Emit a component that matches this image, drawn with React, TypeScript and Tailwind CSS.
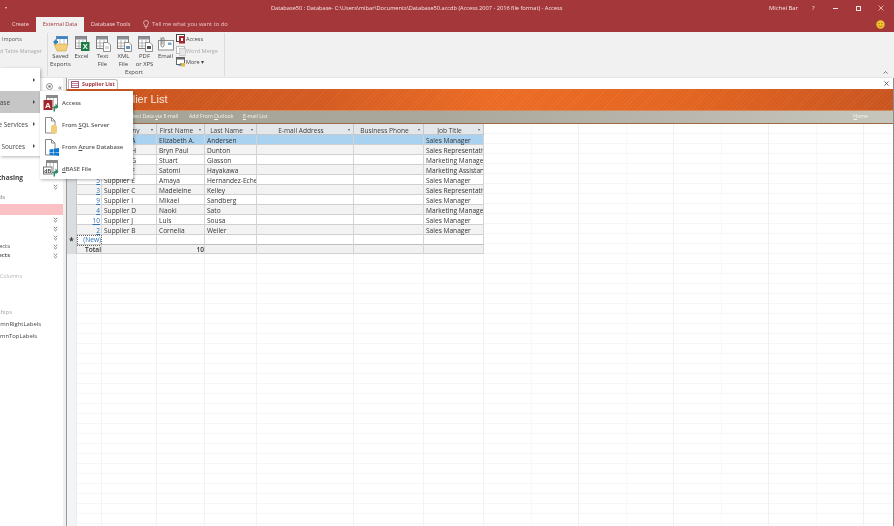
import type { ReactNode } from 'react'

const COLS = 'grid grid-cols-[10px_25px_55px_48px_52px_97px_70px_60px]'

const SUPPLIERS = [
  ['1', 'Supplier A', 'Elizabeth A.', 'Andersen', 'Sales Manager'],
  ['8', 'Supplier H', 'Bryn Paul', 'Dunton', 'Sales Representative'],
  ['7', 'Supplier G', 'Stuart', 'Glasson', 'Marketing Manager'],
  ['6', 'Supplier F', 'Satomi', 'Hayakawa', 'Marketing Assistant'],
  ['5', 'Supplier E', 'Amaya', 'Hernandez-Echevarria', 'Sales Manager'],
  ['3', 'Supplier C', 'Madeleine', 'Kelley', 'Sales Representative'],
  ['9', 'Supplier I', 'Mikael', 'Sandberg', 'Sales Manager'],
  ['4', 'Supplier D', 'Naoki', 'Sato', 'Marketing Manager'],
  ['10', 'Supplier J', 'Luis', 'Sousa', 'Sales Manager'],
  ['2', 'Supplier B', 'Cornelia', 'Weiler', 'Sales Manager'],
]

const HEADERS = ['Company', 'First Name', 'Last Name', 'E-mail Address', 'Business Phone', 'Job Title']

// ── Ribbon icons ───────────────────────────────────────────────────────────
function TableBase({ children, size = 16 }: { children?: ReactNode; size?: number }) {
  return (
    <svg width={size} height={size} viewBox="0 0 16 16" className="block">
      <rect x="1.5" y="0.5" width="11" height="12" fill="#fff" stroke="#7d7d7d" />
      <rect x="1.5" y="0.5" width="11" height="3" fill="#8a8f96" />
      <path d="M5 4v8M9 4v8M2 7h10M2 10h10" stroke="#9a9a9a" strokeWidth="0.7" />
      {children}
    </svg>
  )
}

function SavedExportsIcon() {
  return (
    <svg width="18" height="16" viewBox="0 0 18 16" className="block">
      <rect x="4.5" y="0.5" width="11" height="8" fill="#fff" stroke="#6c8fb5" />
      <rect x="4.5" y="0.5" width="11" height="2.5" fill="#3f86c8" />
      <path d="M8 3v5M12 3v5" stroke="#9ab" strokeWidth="0.7" />
      <path d="M2 8h14l-2 7H5z" fill="#f2cf78" stroke="#c9a24a" strokeWidth="0.6" />
      <path d="M1 6l3-3v2h2v2H4v2z" fill="#2f83c5" />
    </svg>
  )
}

function ExcelIcon() {
  return (
    <TableBase>
      <rect x="7" y="6" width="8.5" height="9" fill="#1e7a45" />
      <text x="11.2" y="13.4" textAnchor="middle" fontSize="7.5" fontWeight="700" fill="#fff" fontFamily="Liberation Sans">X</text>
    </TableBase>
  )
}

function PageIcon({ mark }: { mark: string }) {
  return (
    <TableBase>
      <path d="M8.5 6.5h4.5l2.5 2.5v6.5h-7z" fill="#fff" stroke="#777" strokeWidth="0.8" />
      <rect x="10" y="10" width="4" height="3" fill={mark} />
    </TableBase>
  )
}

function EmailIcon() {
  return (
    <svg width="16" height="16" viewBox="0 0 16 16" className="block">
      <rect x="0.5" y="4.5" width="15" height="9.5" fill="#fff" stroke="#8c8c8c" />
      <rect x="10" y="6.5" width="3.5" height="2.5" fill="#7fa6cf" />
      <path d="M3 1.5v8a1.5 1.5 0 0 0 3 0v-7a1 1 0 0 0-2 0v6" fill="none" stroke="#777" strokeWidth="0.9" />
    </svg>
  )
}

function AccessSmall() {
  return (
    <svg width="10" height="10" viewBox="0 0 10 10" className="block">
      <rect x="0.5" y="0.5" width="8" height="7" fill="#fff" stroke="#444" />
      <rect x="3" y="2" width="6" height="7.5" fill="#a4262c" />
      <rect x="5" y="4" width="2" height="3" fill="#fff" />
    </svg>
  )
}

function WordMergeSmall() {
  return (
    <svg width="10" height="10" viewBox="0 0 10 10" className="block">
      <rect x="0.5" y="0.5" width="8" height="7" fill="#fff" stroke="#bbb" />
      <rect x="3.5" y="2.5" width="6" height="7" fill="#e6e6e6" stroke="#bbb" strokeWidth="0.6" />
    </svg>
  )
}

function MoreSmall() {
  return (
    <svg width="10" height="10" viewBox="0 0 10 10" className="block">
      <rect x="0.5" y="0.5" width="8" height="7" fill="#fff" stroke="#666" />
      <rect x="0.5" y="0.5" width="8" height="2" fill="#666" />
      <path d="M4 6h5v3.5H4z" fill="#e8b94a" />
      <path d="M2 9l2.5-3 1 2z" fill="#2f83c5" />
    </svg>
  )
}

function RibbonButton({ icon, lines }: { icon: ReactNode; lines: string[] }) {
  return (
    <div className="w-[21px] flex flex-col items-center pt-[3px]">
      <div className="h-[15px] flex items-start justify-center">{icon}</div>
      <div className="mt-[1px] text-center leading-[8px] whitespace-nowrap">
        {lines.map((l) => (
          <div key={l}>{l}</div>
        ))}
      </div>
    </div>
  )
}

// ── Menu icons ─────────────────────────────────────────────────────────────
function GreenArrow({ x, y }: { x: number; y: number }) {
  return <path transform={`translate(${x} ${y})`} d="M0 8V4.5C0 3 1 2.5 2 2.5V0l3 3-3 3V4C1.5 4 1.5 4.5 1.5 5v3z" fill="#2a8a63" />
}

function MenuAccessIcon() {
  return (
    <svg width="17" height="17" viewBox="0 0 17 17" className="block">
      <rect x="3.5" y="0.5" width="11" height="12" fill="#fff" stroke="#888" />
      <rect x="3.5" y="0.5" width="11" height="2.5" fill="#8a8a8a" />
      <path d="M7 3v9M10.5 3v9" stroke="#aaa" strokeWidth="0.7" />
      <rect x="0.5" y="5" width="9" height="10" fill="#a4262c" />
      <text x="5" y="13" textAnchor="middle" fontSize="8" fontWeight="700" fill="#fff" fontFamily="Liberation Sans">A</text>
      <GreenArrow x={10.5} y={8.5} />
    </svg>
  )
}

function MenuSqlIcon() {
  return (
    <svg width="17" height="17" viewBox="0 0 17 17" className="block">
      <path d="M2.5 0.5h6l3.5 3.5v12h-9.5z" fill="#fff" stroke="#888" />
      <path d="M8.5 0.5v3.5h3.5" fill="none" stroke="#888" />
      <rect x="8" y="8" width="6" height="8.5" rx="1.5" fill="#f0ce7a" />
    </svg>
  )
}

function MenuAzureIcon() {
  return (
    <svg width="17" height="17" viewBox="0 0 17 17" className="block">
      <path d="M2.5 0.5h6l3.5 3.5v12h-9.5z" fill="#fff" stroke="#888" />
      <path d="M8.5 0.5v3.5h3.5" fill="none" stroke="#888" />
      <path d="M6.5 10.5l4-.6v3h-4zM11 9.8l5-.8v4h-5zM6.5 13.4h4v3l-4-.6zM11 13.4h5v3.6l-5-.8z" fill="#0a78d4" />
    </svg>
  )
}

function MenuDbaseIcon() {
  return (
    <svg width="17" height="17" viewBox="0 0 17 17" className="block">
      <rect x="3.5" y="0.5" width="11" height="12" fill="#fff" stroke="#888" />
      <rect x="3.5" y="0.5" width="11" height="2.5" fill="#8a8a8a" />
      <path d="M7 3v9M10.5 3v9" stroke="#aaa" strokeWidth="0.7" />
      <rect x="0.5" y="7" width="8.5" height="7" fill="#fff" stroke="#777" />
      <text x="4.7" y="12.5" textAnchor="middle" fontSize="5" fill="#333" fontFamily="Liberation Sans">dB</text>
      <GreenArrow x={10.5} y={8.5} />
    </svg>
  )
}

function Chevrons() {
  return (
    <svg width="5" height="6" viewBox="0 0 5 6" className="block">
      <path d="M0.8 0.8l1.7 1.6 1.7-1.6M0.8 3.3l1.7 1.6 1.7-1.6" fill="none" stroke="#666" strokeWidth="0.8" />
    </svg>
  )
}

function DropArrow() {
  return <span className="absolute right-[3px] top-[5px] w-0 h-0 border-l-[1.5px] border-r-[1.5px] border-t-[2px] border-l-transparent border-r-transparent border-t-[#555]" />
}

// Text whose start is cut off by the left edge of the window
function Clip({ w, children, className = '' }: { w: string; children: ReactNode; className?: string }) {
  return <div className={`${w} flex justify-end overflow-hidden whitespace-nowrap ${className}`}>{children}</div>
}

function MenuArrow() {
  return <span className="w-0 h-0 border-t-[2px] border-b-[2px] border-l-[2.5px] border-t-transparent border-b-transparent border-l-[#444]" />
}

function NavPane() {
  return (
    <div className="w-[63px] shrink-0 bg-white flex flex-col text-[5.9px] leading-[9px] text-[#444]">
      <div className="mt-[95px] h-[9px] shrink-0 flex">
        <Clip w="w-[23px]" className="font-bold text-[6.6px]">Supplier Purchasing</Clip>
      </div>
      <div className="h-[10px] shrink-0 flex items-center pl-[53px]"><Chevrons /></div>
      <div className="h-[10px] shrink-0 flex items-center text-[#777]"><Clip w="w-[5px]">Details</Clip></div>
      <div className="mt-[2px] h-[11px] shrink-0 bg-[#fbc0c3]" />
      <div className="h-[9px] shrink-0 flex items-center pl-[53px]"><Chevrons /></div>
      <div className="h-[9px] shrink-0 flex items-center pl-[53px]"><Chevrons /></div>
      <div className="h-[9px] shrink-0 flex items-center pl-[53px]"><Chevrons /></div>
      <div className="h-[9px] shrink-0 flex items-center justify-between pr-[5px]">
        <Clip w="w-[10px]">Projects</Clip><Chevrons />
      </div>
      <div className="h-[9px] shrink-0 flex items-center justify-between pr-[5px]">
        <Clip w="w-[10px]" className="font-semibold">Objects</Clip><Chevrons />
      </div>
      <div className="mt-[12px] h-[9px] shrink-0 text-[#b5b5b5]"><Clip w="w-[22px]" className="text-[5.4px]">Columns</Clip></div>
      <div className="mt-[27px] h-[9px] shrink-0 text-[#a5a5a5]"><Clip w="w-[12px]">Relationships</Clip></div>
      <div className="mt-[3px] h-[9px] shrink-0"><Clip w="w-[41px]">TwoColumnRightLabels</Clip></div>
      <div className="mt-[3px] h-[9px] shrink-0"><Clip w="w-[37px]">TwoColumnTopLabels</Clip></div>
    </div>
  )
}

function DataTable() {
  return (
    <div className="w-[417px] shrink-0 text-[6.6px] leading-[12px] text-[#333]">
      <div className={`${COLS} h-[11px] bg-[#e4e7ea] border-b border-[#c4c8cc]`}>
        <div className="bg-[#dadde0] border-r border-[#c4c8cc]" />
        <div className="border-r border-[#c4c8cc]" />
        {HEADERS.map((h) => (
          <div key={h} className="relative border-r border-[#c4c8cc] pr-[8px] text-center text-[6.6px] leading-[13px] text-[#3c3c3c] whitespace-nowrap overflow-hidden">
            {h}
            <DropArrow />
          </div>
        ))}
      </div>
      {SUPPLIERS.map((s, i) => (
        <div key={s[1]} className={`${COLS} h-[10px] border-b border-[#cfcfcf] ${i === 0 ? 'bg-[#a9d1f0]' : i % 2 ? 'bg-[#f3f3f3]' : 'bg-white'}`}>
          <div className="bg-[#dadde0] border-r border-[#c4c8cc]" />
          <div className="border-r border-[#d4d4d4] text-right text-[#2b72b8] underline pr-[1px]">{s[0]}</div>
          {[s[1], s[2], s[3], '', '', s[4]].map((v, j) => (
            <div key={j} className="border-r border-[#d4d4d4] pl-[2px] whitespace-nowrap overflow-hidden">{v}</div>
          ))}
        </div>
      ))}
      <div className={`${COLS} h-[10px] bg-white border-b border-[#bdbdbd]`}>
        <div className="bg-[#dadde0] border-r border-[#c4c8cc] text-center font-bold text-[8px] leading-[11px]">*</div>
        <div className="border border-dotted border-[#666] text-right text-[#2b72b8] leading-[8px]">(New)</div>
        {[0, 1, 2, 3, 4, 5].map((k) => (
          <div key={k} className="border-r border-[#d4d4d4]" />
        ))}
      </div>
      <div className={`${COLS} h-[9px] bg-[#f1f1f1] border-b border-[#d0d0d0] leading-[10px]`}>
        <div className="bg-[#dadde0] border-r border-[#c4c8cc]" />
        <div className="border-r border-[#d4d4d4] text-right font-semibold">Total</div>
        <div className="border-r border-[#d4d4d4]" />
        <div className="border-r border-[#d4d4d4] text-right font-semibold">10</div>
        {[0, 1, 2, 3].map((k) => (
          <div key={k} className="border-r border-[#d4d4d4]" />
        ))}
      </div>
    </div>
  )
}

function GhostGrid() {
  return (
    <div className="flex flex-1 min-h-0">
      <div className="w-[417px] shrink-0 flex flex-col">
        <DataTable />
        <div className={`${COLS} flex-1`}>
          <div className="bg-[#f3f4f6] border-r border-[#ececec]" />
          {[0, 1, 2, 3, 4, 5, 6].map((k) => (
            <div key={k} className="border-r border-[#f3f3f3]" />
          ))}
        </div>
      </div>
      <div className="flex flex-1">
        {[0, 1, 2, 3, 4, 5, 6, 7, 8].map((k) => (
          <div key={k} className={`w-[47.5px] border-r ${k % 2 ? 'border-[#f1f1f1]' : 'border-[#f8f8f8]'}`} />
        ))}
      </div>
    </div>
  )
}

export default function App() {
  return (
    <div className="relative w-[894px] h-[526px] overflow-hidden flex flex-col bg-white font-['Open_Sans',sans-serif] text-[#444] blur-[0.3px]">
      {/* Title bar */}
      <div className="h-[15px] shrink-0 pt-[1px] bg-[#a4373a] text-[#f6e6e6] text-[5.65px] flex items-center">
        <span className="ml-[5px] w-0 h-0 border-l-[1.5px] border-r-[1.5px] border-t-[2px] border-l-transparent border-r-transparent border-t-[#eecfcf]" />
        <span className="ml-[264px] w-[498px] whitespace-nowrap">Database50 : Database- C:\Users\mibar\Documents\Database50.accdb (Access 2007 - 2016 file format)  -  Access</span>
        <span className="w-[43px] whitespace-nowrap text-[5.9px]">Michel Bar</span>
        <span className="w-[21px] text-[5.9px]">?</span>
        <span className="w-[23px] h-[1px]"><span className="block w-[5px] h-[1px] bg-[#f6e6e6]" /></span>
        <span className="w-[22px]"><span className="block w-[5px] h-[5px] border border-[#f6e6e6]" /></span>
        <svg width="6" height="6" viewBox="0 0 6 6"><path d="M0.5 0.5l5 5M5.5 0.5l-5 5" stroke="#f6e6e6" strokeWidth="0.7" /></svg>
      </div>

      {/* Ribbon tabs */}
      <div className="h-[17px] shrink-0 pt-[1px] bg-[#a4373a] flex items-end text-[5.5px] leading-[15px] text-[#f3dada]">
        <span className="ml-[12px] w-[24px] whitespace-nowrap self-center">Create</span>
        <span className="w-[48px] h-[15px] bg-[#f1f1f1] text-[#a4373a] text-center whitespace-nowrap">External Data</span>
        <span className="ml-[7px] w-[52px] whitespace-nowrap self-center">Database Tools</span>
        <svg width="6" height="9" viewBox="0 0 6 9" className="self-center mr-[3px]">
          <path d="M3 .5a2.4 2.4 0 0 0-1.2 4.5V6.5h2.4V5A2.4 2.4 0 0 0 3 .5zM2 8h2" fill="none" stroke="#f3dada" strokeWidth="0.7" />
        </svg>
        <span className="whitespace-nowrap self-center text-[5.75px] text-[#e9c5c5]">Tell me what you want to do</span>
        <span className="flex-1" />
        <svg width="9" height="9" viewBox="0 0 9 9" className="self-center mr-[9px]">
          <circle cx="4.5" cy="4.5" r="4.2" fill="#f0c22e" />
          <circle cx="3" cy="3.5" r="0.6" fill="#7a5c10" />
          <circle cx="6" cy="3.5" r="0.6" fill="#7a5c10" />
          <path d="M2.4 5.5c1 1.4 3.2 1.4 4.2 0" fill="none" stroke="#7a5c10" strokeWidth="0.6" />
        </svg>
      </div>

      {/* Ribbon */}
      <div className="h-[46px] shrink-0 bg-[#f1f1f1] border-b border-[#e4e4e4] flex text-[5.9px] text-[#444]">
        <div className="w-[48px] shrink-0 border-r border-[#dcdcdc] h-[43px] mt-[1px] flex flex-col text-[5.4px] leading-[12px] whitespace-nowrap overflow-hidden">
          <span className="pl-[2px] text-[#555]">Imports</span>
          <Clip w="w-[42px]" className="text-[#aaa]">Linked Table Manager</Clip>
        </div>
        <div className="w-[177px] shrink-0 border-r border-[#dcdcdc] h-[43px] mt-[1px] flex flex-col">
          <div className="h-[36px] flex pl-[2px]">
            <RibbonButton icon={<SavedExportsIcon />} lines={['Saved', 'Exports']} />
            <RibbonButton icon={<ExcelIcon />} lines={['Excel']} />
            <RibbonButton icon={<PageIcon mark="#d8d8d8" />} lines={['Text', 'File']} />
            <RibbonButton icon={<PageIcon mark="#5f94c9" />} lines={['XML', 'File']} />
            <RibbonButton icon={<PageIcon mark="#555" />} lines={['PDF', 'or XPS']} />
            <RibbonButton icon={<EmailIcon />} lines={['Email']} />
            <div className="flex flex-col gap-[1.5px] pt-[1px] text-[5.5px] leading-[10px]">
              <div className="flex items-center"><AccessSmall />Access</div>
              <div className="flex items-center text-[#aaa]"><WordMergeSmall />Word Merge</div>
              <div className="flex items-center"><MoreSmall />More ▾</div>
            </div>
          </div>
          <div className="text-center leading-[9px] pr-[4px]">Export</div>
        </div>
        <span className="flex-1" />
        <svg width="5" height="3" viewBox="0 0 5 3" className="self-end mb-[3px] mr-[6px]">
          <path d="M0.5 2.5l2-2 2 2" fill="none" stroke="#555" strokeWidth="0.8" />
        </svg>
      </div>

      {/* Body */}
      <div className="flex flex-1 min-h-0 border-r border-[#8a8a8a]">
        <NavPane />
        <div className="w-[4px] shrink-0 bg-[#efefef] border-r border-[#9a9a9a]" />
        <div className="flex-1 flex flex-col min-w-0">
          {/* Document tab */}
          <div className="h-[11px] shrink-0 bg-white flex items-end">
            <div className="ml-[1px] w-[50px] h-[10px] bg-white border border-b-0 border-[#bdbdbd] rounded-tr-[3px] flex items-center pl-[2px] gap-[3px]">
              <svg width="8" height="7" viewBox="0 0 8 7"><rect x="0.5" y="0.5" width="7" height="6" fill="#fff" stroke="#a05a7a" /><path d="M1 2.5h6M1 4.5h6" stroke="#a05a7a" strokeWidth="0.7" /></svg>
              <span className="text-[5.3px] font-bold text-[#a4373a] whitespace-nowrap leading-[9px]">Supplier List</span>
            </div>
            <span className="flex-1" />
            <svg width="5" height="5" viewBox="0 0 5 5" className="self-center mr-[4px]"><path d="M0.5 0.5l4 4M4.5 0.5l-4 4" stroke="#444" strokeWidth="0.8" /></svg>
          </div>

          {/* Form header */}
          <div className="h-[22px] shrink-0 flex items-center pl-[40px] text-[11px] text-[#fde9dc] font-['Liberation_Sans',sans-serif] bg-[repeating-linear-gradient(135deg,rgba(255,255,255,0.05)_0,rgba(255,255,255,0.05)_1px,transparent_1px,transparent_3px),linear-gradient(90deg,#c9531d_0%,#d35a20_30%,#ec6b24_52%,#e3641f_75%,#c9541f_100%)] border-b border-[#d98a5c]">
            Supplier List
          </div>
          <div className="h-[13px] shrink-0 flex items-center text-[5.2px] text-[#f4f3ef] bg-[linear-gradient(90deg,#a5a296,#aaa79c_45%,#c7c6bd_100%)] border-b border-[#9c6a4a] whitespace-nowrap">
            <span className="ml-[58px] w-[64px]">Collect Data <span className="underline">v</span>ia E-mail</span>
            <span className="w-[54px]">Add From <span className="underline">O</span>utlook</span>
            <span className="flex-1"><span className="underline">E</span>-mail List</span>
            <span className="mr-[25px]"><span className="underline">H</span>ome</span>
          </div>

          {/* Datasheet and the empty lines below it */}
          <div className="flex-1 min-h-0 flex bg-[repeating-linear-gradient(to_bottom,transparent_0,transparent_9px,#f6f6f6_9px,#f6f6f6_10px)]">
            <GhostGrid />
          </div>
        </div>
      </div>

      {/* Left flyout */}
      <div className="absolute left-0 top-[68px] w-[40px] h-[88px] bg-white shadow-[1px_1px_3px_rgba(0,0,0,0.3)] flex flex-col text-[6.4px] text-[#444]">
        {[
          ['Text File', 'h-[23px]', ''],
          ['Database', 'h-[22px]', 'bg-[#c6c6c6]'],
          ['Online Services', 'h-[22px]', ''],
          ['Other Data Sources', 'h-[21px]', ''],
        ].map(([label, h, bg], i) => (
          <div key={label} className={`${h} ${bg} flex items-center pr-[5px] justify-between`}>
            {i === 0 ? (
              <span />
            ) : (
              <Clip w={i === 1 ? 'w-[10px]' : i === 2 ? 'w-[28px]' : 'w-[25px]'} className="pt-[2px]">{label}</Clip>
            )}
            <MenuArrow />
          </div>
        ))}
      </div>

      {/* Database flyout */}
      <div className="absolute left-[40px] top-[91px] w-[93px] h-[88px] pt-[1px] bg-white shadow-[1px_1px_3px_rgba(0,0,0,0.3)] flex flex-col text-[5.9px] font-semibold text-[#555]">
        <div className="h-[22px] shrink-0 flex items-center gap-[2px] pl-[3px]"><MenuAccessIcon /><span className="pt-[1px]">Access</span></div>
        <div className="h-[22px] shrink-0 flex items-center gap-[2px] pl-[3px]"><MenuSqlIcon /><span className="pt-[1px]">From <span className="underline">S</span>QL Server</span></div>
        <div className="h-[22px] shrink-0 flex items-center gap-[2px] pl-[3px]"><MenuAzureIcon /><span className="pt-[1px]">From <span className="underline">A</span>zure Database</span></div>
        <div className="h-[21px] shrink-0 flex items-center gap-[2px] pl-[3px]"><MenuDbaseIcon /><span className="pt-[1px]"><span className="underline">d</span>BASE File</span></div>
      </div>

      {/* Nav pane header controls, next to the flyouts */}
      <div className="absolute left-[46px] top-[83px] flex items-center gap-[5px] text-[#555]">
        <svg width="7" height="7" viewBox="0 0 7 7"><circle cx="3.5" cy="3.5" r="3" fill="none" stroke="#666" strokeWidth="0.7" /><circle cx="3.5" cy="3.5" r="1.2" fill="#777" /></svg>
        <span className="text-[8px] leading-[7px]">«</span>
      </div>
    </div>
  )
}
